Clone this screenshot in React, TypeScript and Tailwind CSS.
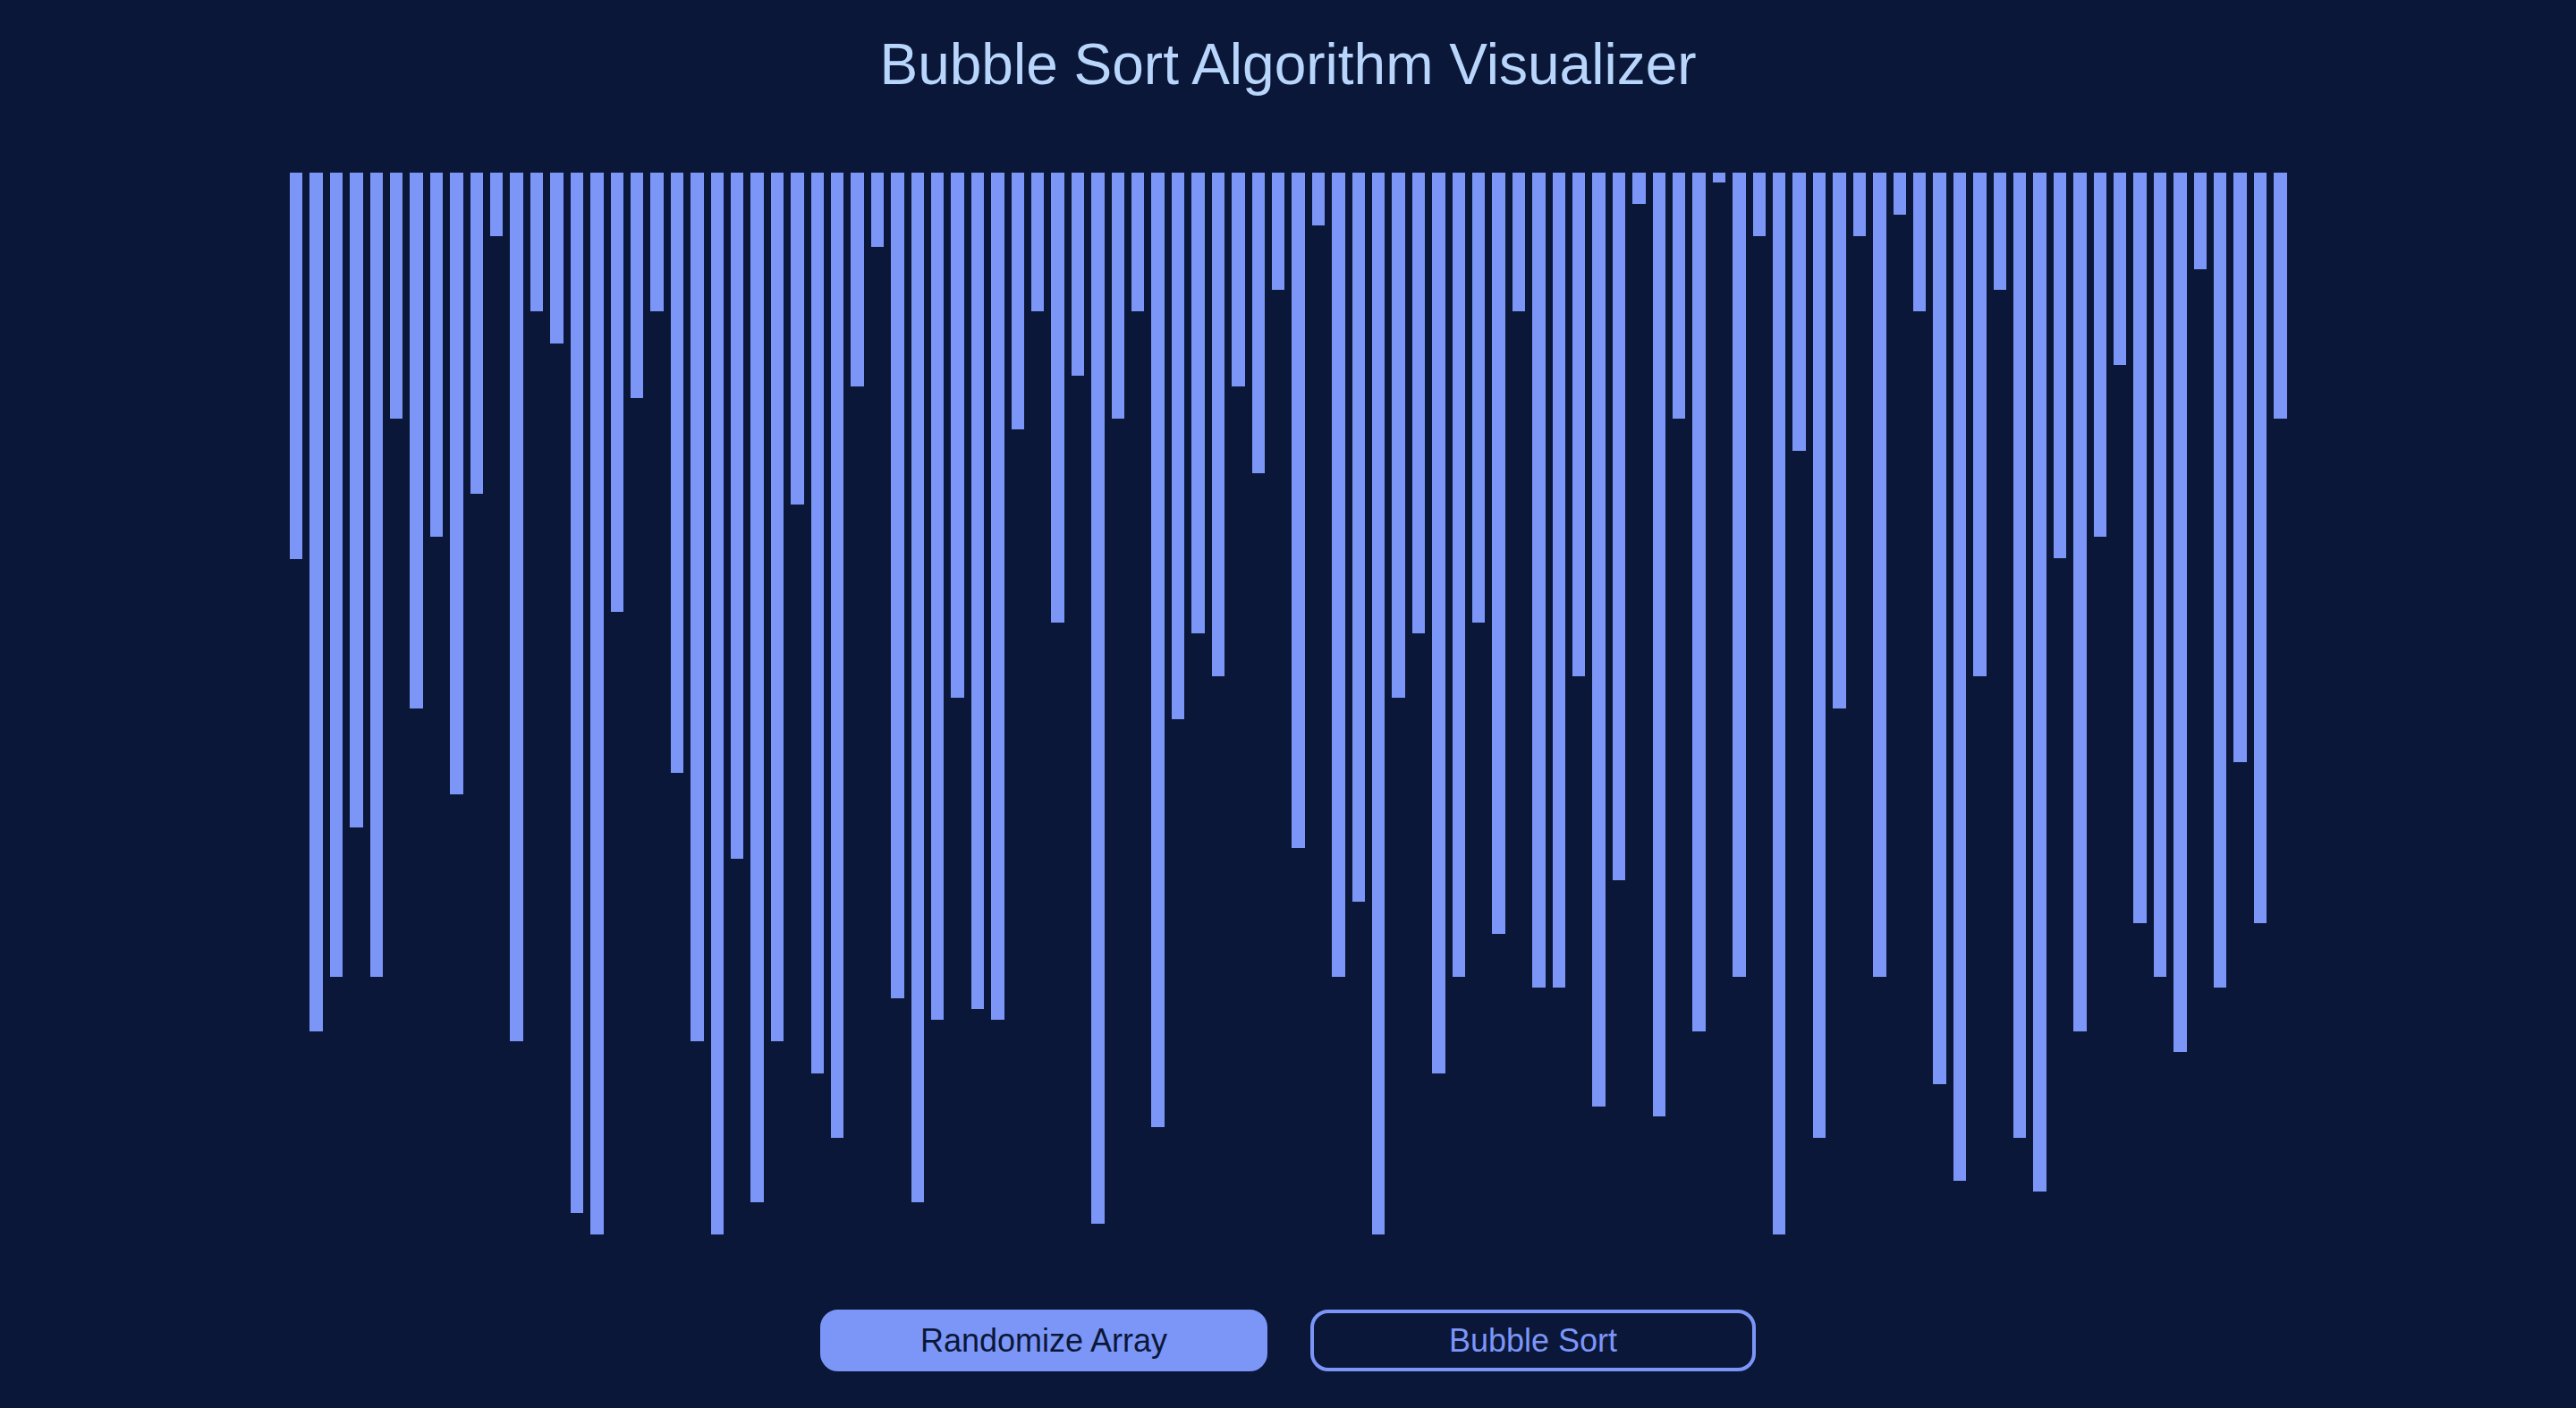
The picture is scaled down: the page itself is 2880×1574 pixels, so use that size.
import React from "react";

const HEIGHTS = [
  432, 960, 899, 732, 899, 275, 599, 407, 695, 359,
  71, 971, 155, 191, 1163, 1187, 491, 252, 155, 671,
  971, 1187, 767, 1151, 971, 371, 1007, 1079, 239, 83,
  923, 1151, 947, 587, 935, 947, 287, 155, 503, 227,
  1175, 275, 155, 1067, 611, 515, 563, 239, 336, 131,
  755, 59, 899, 815, 1187, 587, 515, 1007, 899, 503,
  851, 155, 911, 911, 563, 1044, 791, 35, 1055, 275,
  960, 11, 899, 71, 1187, 311, 1079, 599, 71, 899,
  47, 155, 1019, 1127, 563, 131, 1079, 1139, 431, 960,
  407, 215, 839, 899, 983, 108, 911, 659, 839, 275,
];

export default function App() {
  return (
    <div
      className="w-full h-[1574px] bg-[#0b1739] flex flex-col items-center overflow-hidden"
      style={{ fontFamily: '"Liberation Sans", Arial, Helvetica, sans-serif' }}
    >
      <h1 className="pt-[36px] text-[64px] leading-[72px] text-[#b8d5fb] font-normal">
        Bubble Sort Algorithm Visualizer
      </h1>
      <div className="mt-[85px] w-[2240px] h-[1188px] flex items-start">
        {HEIGHTS.map((h, i) => (
          <div
            key={i}
            className="flex-1 mx-[4px] bg-[#7c96f8]"
            style={{ height: `${h}px` }}
          />
        ))}
      </div>
      <div className="mt-[83px] flex gap-[48px]">
        <button className="w-[500px] h-[69px] rounded-[20px] border-[4px] border-[#7c96f8] bg-[#7c96f8] text-[#0b1739] text-[36px] leading-none">
          Randomize Array
        </button>
        <button className="w-[498px] h-[69px] rounded-[20px] border-[4px] border-[#7c96f8] bg-transparent text-[#7c96f8] text-[36px] leading-none">
          Bubble Sort
        </button>
      </div>
    </div>
  );
}
